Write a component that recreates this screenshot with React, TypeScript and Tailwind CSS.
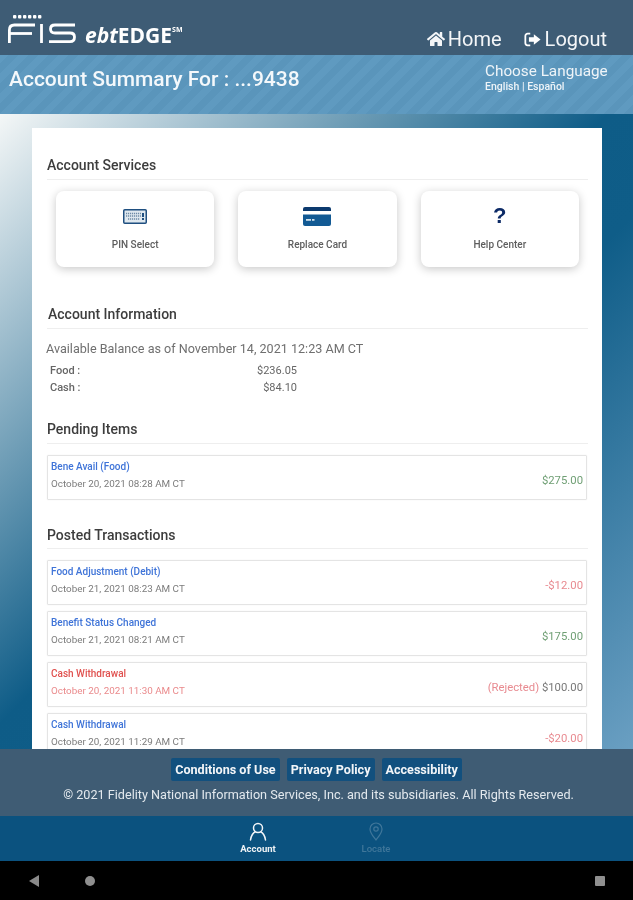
import React from "react";
import { FaHome } from "react-icons/fa";

const font = { fontFamily: "Roboto, 'Liberation Sans', sans-serif" };

function Logo() {
  return (
    <svg width="68" height="28" viewBox="0 0 68 28" fill="none" className="shrink-0">
      <g fill="#fff">
        {[4, 9, 14, 19, 24, 29].map((x) => (
          <rect key={x} x={x + 1} y="0" width="3.400" height="3.400" rx="1" />
        ))}
      </g>
      <g stroke="#fff" strokeWidth="2.800" fill="none">
        <path d="M1.400 28V15c0-3.500 1.600-5 5-5H27" />
        <path d="M1.400 18.500H24" />
        <path d="M33.500 9v19" />
        <path d="M67 10H47c-3 0-4.500 1.300-4.500 4s1.500 4 4.500 4h15c3 0 4.500 1.400 4.500 4s-1.500 4.600-4.500 4.600H41" />
      </g>
    </svg>
  );
}

function LogoutIcon() {
  return (
    <svg width="17" height="15" viewBox="0 0 19 16" fill="none">
      <path d="M7 1.500H4A2.500 2.500 0 0 0 1.500 4v8A2.500 2.500 0 0 0 4 14.500h3" stroke="#fff" strokeWidth="2" />
      <path d="M5.500 5.500h5.500V2l7.500 6-7.500 6v-3.500H5.500z" fill="#fff" />
    </svg>
  );
}

function KeyboardIcon() {
  return (
    <svg width="24" height="15" viewBox="0 0 24 15" fill="none">
      <rect x="0.750" y="0.750" width="22.500" height="13.500" rx="1" fill="#dfe8ef" stroke="#1f4f80" strokeWidth="1.500" />
      <path d="M3 4.500h15M3 7h15M5 10h12" stroke="#6e8aa6" strokeWidth="1.400" strokeDasharray="1.200 0.800" />
      <rect x="19" y="4" width="2" height="4" fill="#1f4f80" />
      <rect x="19" y="9" width="2" height="2" fill="#1f4f80" />
    </svg>
  );
}

function CardIcon() {
  return (
    <svg width="28" height="19" viewBox="0 0 28 19">
      <path d="M2 0h24a2 2 0 0 1 2 2v2H0V2a2 2 0 0 1 2-2z" fill="#0c3a6e" />
      <path d="M0 7.500h28V17a2 2 0 0 1-2 2H2a2 2 0 0 1-2-2z" fill="#125a94" />
      <rect x="3" y="12" width="5" height="1.800" fill="#cfe0ec" />
      <rect x="9" y="12" width="2.500" height="1.800" fill="#cfe0ec" />
    </svg>
  );
}

function Tile({ icon, label }: { icon: React.ReactNode; label: string }) {
  return (
    <div className="flex h-[76px] flex-1 flex-col items-center rounded-lg bg-white shadow-[0_2px_10px_rgba(0,0,0,0.22)]">
      <div className="flex h-[46px] items-center pt-[4px]">{icon}</div>
      <div className="mt-[1px] text-[10px] font-medium leading-[14px] text-[#5d5d5d]">{label}</div>
    </div>
  );
}

function SectionTitle({ children, className = "" }: { children: React.ReactNode; className?: string }) {
  return (
    <div className={`border-b border-[#eeeeee] text-[14px] font-medium leading-[20px] text-[#3d3d3d] ${className}`}>
      {children}
    </div>
  );
}

type Tx = {
  title: string;
  date: string;
  titleC?: string;
  dateC?: string;
  amount: React.ReactNode;
};

function Row({ title, date, titleC = "text-[#3f74d8]", dateC = "text-[#7c7c7c]", amount }: Tx) {
  return (
    <div className="mr-[1px] flex h-[45px] shrink-0 items-stretch justify-between rounded-[1px] border border-[#e4e4e4] pl-[3px] pr-[3px] shadow-[0_0_2px_rgba(0,0,0,0.06)]">
      <div className="pt-[4px]">
        <div className={`text-[10px] font-medium leading-[13px] ${titleC}`}>{title}</div>
        <div className={`mt-[4px] text-[9.850px] leading-[13px] ${dateC}`}>{date}</div>
      </div>
      <div className="flex items-center pt-[7px] text-[11.300px] leading-[14px]">{amount}</div>
    </div>
  );
}

export default function App() {
  return (
    <div className="flex h-[900px] w-[633px] flex-col overflow-hidden bg-black blur-[0.4px]" style={font}>
      <header className="flex h-[55px] shrink-0 items-end justify-between bg-[#3e5c75] pl-[8px] pr-[26px] text-white">
        <div className="mb-[12px] flex items-end gap-[9px]">
          <Logo />
          <div className="relative top-[3px] flex items-start text-[21px] font-bold leading-[22px] text-white" style={{ fontFamily: "'Open Sans', sans-serif" }}>
            <span className="italic">ebt</span>
            <span>EDGE</span>
            <span className="text-[7px] leading-[12px]">SM</span>
          </div>
        </div>
        <nav className="mb-[4px] flex items-center gap-[22px] text-[20px] leading-[24px] text-[#f4f6f8]">
          <span className="flex items-center gap-[3px]">
            <FaHome className="text-[18px]" />
            Home
          </span>
          <span className="flex items-center gap-[4px]">
            <LogoutIcon />
            Logout
          </span>
        </nav>
      </header>

      <div className="flex h-[59px] shrink-0 items-start justify-between bg-[#5a95bb] bg-[repeating-linear-gradient(-45deg,#5a95bb_0px,#5a95bb_7px,#5f9ac0_7px,#5f9ac0_14px)] pl-[9px] pr-[24px] text-white">
        <div className="mt-[11px] text-[21px] font-medium leading-[26px] text-[#f4f8fb]">Account Summary For : ...9438</div>
        <div className="mt-[7px] w-[124px] text-[#eef4f8]">
          <div className="text-[15.300px] leading-[18px]">Choose Language</div>
          <div className="text-[10.500px] font-medium leading-[14px]">English | Español</div>
        </div>
      </div>

      <main className="flex min-h-0 flex-1 flex-col overflow-hidden bg-[linear-gradient(to_bottom_right,#f4f7f7_0%,#0e5c87_48%,#0f5d88_58%,#6a9fc2_100%)] pl-[32px] pr-[31px] pt-[14px]">
        <div className="min-h-0 flex-1 overflow-hidden bg-white pl-[15px] pr-[14px] pt-[27px]">
          <SectionTitle className="pb-[4px]">Account Services</SectionTitle>
          <div className="mt-[11px] flex gap-[24px] pl-[9px] pr-[9px]">
            <Tile icon={<KeyboardIcon />} label="PIN Select" />
            <Tile icon={<CardIcon />} label="Replace Card" />
            <Tile
              icon={<span className="text-[22px] font-black leading-[22px] text-[#0c2a66]" style={{ fontFamily: "'Liberation Sans', sans-serif" }}>?</span>}
              label="Help Center"
            />
          </div>

          <SectionTitle className="mt-[37px] pb-[4px] pl-[1px]">Account Information</SectionTitle>
          <div className="-ml-[1px] mt-[11px] text-[12.600px] leading-[18px] text-[#6f6f6f]">Available Balance as of November 14, 2021 12:23 AM CT</div>
          <div className="mt-[4px] w-[250px] pl-[3px] text-[11px] leading-[17px] text-[#666]">
            <div className="flex justify-between">
              <span className="font-medium">Food :</span>
              <span>$236.05</span>
            </div>
            <div className="flex justify-between">
              <span className="font-medium">Cash :</span>
              <span>$84.10</span>
            </div>
          </div>

          <SectionTitle className="mt-[23px] pb-[4px]">Pending Items</SectionTitle>
          <div className="mt-[11px]">
            <Row
              title="Bene Avail (Food)"
              date="October 20, 2021 08:28 AM CT"
              amount={<span className="text-[#6f9f74]">$275.00</span>}
            />
          </div>

          <SectionTitle className="mt-[25px] pb-[3px]">Posted Transactions</SectionTitle>
          <div className="mt-[11px] flex flex-col gap-[6px]">
            <Row title="Food Adjustment (Debit)" date="October 21, 2021 08:23 AM CT" amount={<span className="text-[#e88a90]">-$12.00</span>} />
            <Row title="Benefit Status Changed" date="October 21, 2021 08:21 AM CT" amount={<span className="text-[#6f9f74]">$175.00</span>} />
            <Row
              title="Cash Withdrawal"
              titleC="text-[#e0514f]"
              dateC="text-[#ea8a8c]"
              date="October 20, 2021 11:30 AM CT"
              amount={
                <span>
                  <span className="text-[#e88a90]">(Rejected)</span> <span className="text-[#777]">$100.00</span>
                </span>
              }
            />
            <Row title="Cash Withdrawal" date="October 20, 2021 11:29 AM CT" amount={<span className="text-[#e88a90]">-$20.00</span>} />
          </div>
        </div>
      </main>

      <footer className="h-[67px] shrink-0 bg-[#3f5c74] pt-[9px] text-center">
        <div className="flex justify-center gap-[7px]">
          {["Conditions of Use", "Privacy Policy", "Accessibility"].map((t) => (
            <span key={t} className="rounded-[2px] bg-[#12507e] px-[4px] text-[12.600px] font-bold leading-[23px] text-[#f2f5f8]">
              {t}
            </span>
          ))}
        </div>
        <div className="mt-[4px] pl-[4px] text-[12.650px] leading-[20px] text-[#e3e9ee]">
          © 2021 Fidelity National Information Services, Inc. and its subsidiaries. All Rights Reserved.
        </div>
      </footer>

      <div className="flex h-[45px] shrink-0 justify-center gap-[78px] bg-[#0b527f] pl-[1px] pt-[6px] text-center">
        <div className="flex w-[40px] flex-col items-center">
          <svg width="18" height="19" viewBox="0 0 18 19" fill="none" stroke="#f2f5f8" strokeWidth="1.500">
            <circle cx="9" cy="6" r="4.500" />
            <path d="M1.500 18c.5-4.500 3-7.500 4.500-8M16.500 18c-.5-4.500-3-7.500-4.500-8" strokeLinecap="round" />
          </svg>
          <div className="mt-[1px] text-[9.500px] font-bold leading-[13px] text-[#eef2f5]">Account</div>
        </div>
        <div className="flex w-[40px] flex-col items-center opacity-30">
          <svg width="14" height="19" viewBox="0 0 14 19" fill="none" stroke="#b8cad8" strokeWidth="1.200">
            <path d="M7 18C3.500 13.500 1 11 1 7a6 6 0 0 1 12 0c0 4-2.500 6.500-6 11z" />
            <circle cx="7" cy="7" r="2.200" />
          </svg>
          <div className="mt-[1px] text-[9.500px] font-medium leading-[13px] text-[#b8cad8]">Locate</div>
        </div>
      </div>

      <div className="flex h-[39px] shrink-0 items-center bg-black pl-[29px] pr-[28px]">
        <div className="h-0 w-0 border-y-[6px] border-r-[10px] border-y-transparent border-r-[#8a8a8a]" />
        <div className="ml-[46px] h-[10px] w-[10px] rounded-full bg-[#8f8f8f]" />
        <div className="ml-auto h-[10px] w-[10px] rounded-[1px] bg-[#8f8f8f]" />
      </div>
    </div>
  );
}
